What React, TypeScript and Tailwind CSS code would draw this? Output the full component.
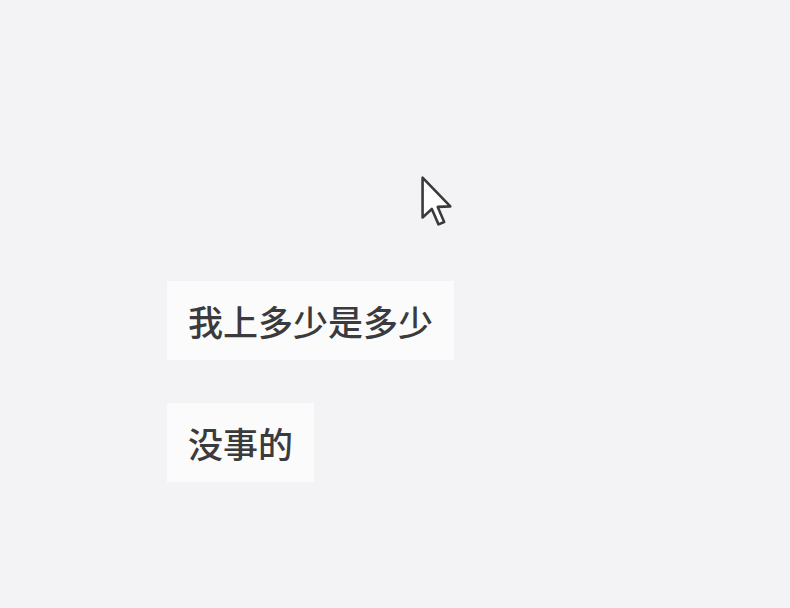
export default function App() {
  const messages = ['我上多少是多少', '没事的'];

  return (
    <div className="relative w-[790px] h-[608px] overflow-hidden bg-[#f3f2f5] font-['Noto_Sans_CJK_SC','Noto_Sans',sans-serif]">
      {/* Chat bubbles */}
      <div className="flex flex-col items-start gap-[43px] pl-[167px] pt-[281px]">
        {messages.map((m) => (
          <div
            key={m}
            className="bg-[#fbfbfc] px-[21px] text-[35px] leading-[79px] font-medium text-[#3b3b3d] whitespace-nowrap"
          >
            {m}
          </div>
        ))}
      </div>

      {/* Mouse pointer */}
      <svg
        className="absolute left-[420px] top-[175px]"
        width="36"
        height="54"
        viewBox="0 0 14 21"
        fill="none"
      >
        <path
          d="M1 1 L1 16.5 L4.6 13.2 L7.2 19.2 L9.4 18.3 L6.9 12.4 L11.8 12.2 Z"
          fill="#ffffff"
          stroke="#3a3a3c"
          strokeWidth="1"
          strokeLinejoin="round"
        />
      </svg>
    </div>
  );
}
